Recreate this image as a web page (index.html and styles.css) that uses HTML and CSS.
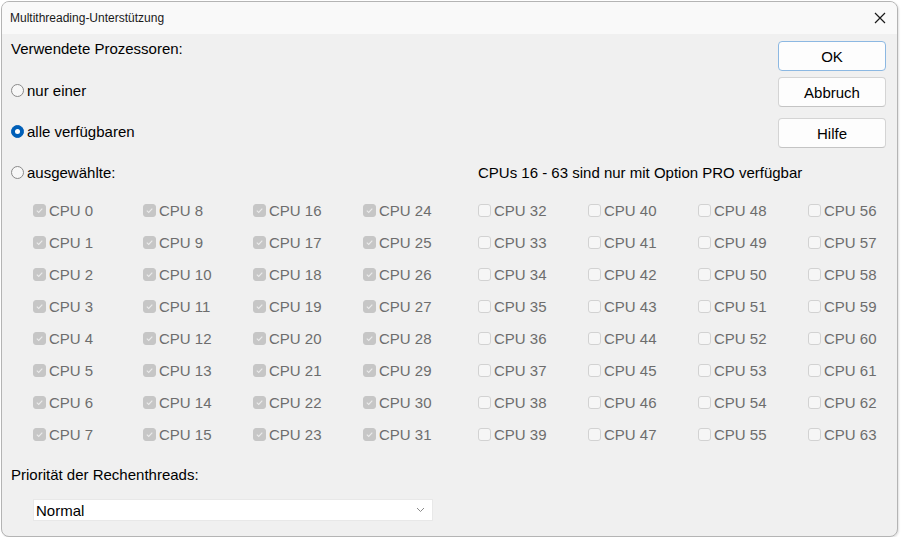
FILE: index.html
```html
<!DOCTYPE html>
<html lang="de">
<head>
    <meta charset="UTF-8">
    <title>Multithreading-Unterstützung</title>
    <link rel="stylesheet" href="styles.css">
</head>
<body>
    <div class="window">
        <div class="titlebar">
            <span class="title">Multithreading-Unterstützung</span>
            <svg class="close" width="12" height="12" viewBox="0 0 12 12">
                <path d="M1 1L11 11M11 1L1 11" stroke="#1a1a1a" stroke-width="1.2" fill="none"/>
            </svg>
        </div>

        <div class="content">
            <div class="main">
                <div class="heading">Verwendete Prozessoren:</div>

                <div class="radio-row">
                    <label class="radio"><span class="dot"></span>nur einer</label>
                </div>
                <div class="radio-row">
                    <label class="radio"><span class="dot checked"></span>alle verfügbaren</label>
                </div>
                <div class="radio-row">
                    <label class="radio pick"><span class="dot"></span>ausgewählte:</label>
                    <span class="note">CPUs 16 - 63 sind nur mit Option PRO verfügbar</span>
                </div>

                <div class="cpu-grid" id="cpuGrid"></div>

                <div class="heading priority">Priorität der Rechenthreads:</div>
                <div class="select">
                    <span>Normal</span>
                    <svg width="9" height="6" viewBox="0 0 9 6">
                        <path d="M1 1L4.5 4.5L8 1" stroke="#8a8a8a" stroke-width="1" fill="none"/>
                    </svg>
                </div>
            </div>

            <div class="buttons">
                <button class="btn default">OK</button>
                <button class="btn">Abbruch</button>
                <button class="btn help">Hilfe</button>
            </div>
        </div>
    </div>

    <script>
        const grid = document.getElementById('cpuGrid');
        for (let i = 0; i < 64; i++) {
            const item = document.createElement('div');
            item.className = 'cpu';
            const box = document.createElement('span');
            box.className = i < 32 ? 'box checked' : 'box';
            if (i < 32) {
                box.innerHTML = '<svg width="9" height="9" viewBox="0 0 9 9"><path d="M1.8 4.6L3.7 6.4L7.3 2.6" stroke="#ececec" stroke-width="1.1" fill="none"/></svg>';
            }
            item.appendChild(box);
            item.appendChild(document.createTextNode('CPU ' + i));
            grid.appendChild(item);
        }
    </script>
</body>
</html>
```

FILE: styles.css
```css
body {
    margin: 0;
    background: #ffffff;
    font-family: "Liberation Sans", Arial, sans-serif;
    font-size: 15px;
    color: #000;
}
.window {
    margin: 1px 0 0 1px;
    width: 895px;
    height: 534px;
    border: 1px solid #b4b4b4;
    border-radius: 8px;
    background: #f0f0f0;
    overflow: hidden;
    display: flex;
    flex-direction: column;
    box-shadow: 1px 1px 2px rgba(0,0,0,0.12);
}
.titlebar {
    height: 32px;
    flex: none;
    background: #f9f9f9;
    display: flex;
    align-items: center;
    justify-content: space-between;
    padding: 0 10px 0 8px;
}
.title {
    font-size: 12px;
    color: #1a1a1a;
}
.close {
    margin-right: 1px;
}
.content {
    flex: 1;
    display: flex;
}
.main {
    flex: 1;
    min-width: 0;
    padding: 5px 0 0 9px;
}
.heading {
    line-height: 20px;
    height: 20px;
}
.heading + .radio-row {
    margin-top: 11px;
}
.radio-row {
    height: 41px;
    display: flex;
    align-items: center;
}
.radio {
    display: flex;
    align-items: center;
    flex: none;
}
.radio.pick {
    width: 467px;
}
.note {
    white-space: nowrap;
}
.dot {
    width: 11px;
    height: 11px;
    border: 1px solid #8a8a8a;
    border-radius: 50%;
    background: #f7f7f7;
    margin-right: 3px;
    box-sizing: content-box;
    position: relative;
}
.dot.checked {
    background: #005fb8;
    border-color: #005fb8;
}
.dot.checked::after {
    content: "";
    position: absolute;
    left: 3px;
    top: 3px;
    width: 5px;
    height: 5px;
    border-radius: 50%;
    background: #fff;
}
.cpu-grid {
    margin: 1px 0 0 22px;
    display: grid;
    grid-auto-flow: column;
    grid-template-rows: repeat(8, 32px);
    grid-template-columns: repeat(3, 110px) 115px repeat(3, 110px) 80px;
}
.cpu {
    display: flex;
    align-items: center;
    color: #6d6d6d;
    white-space: nowrap;
}
.box {
    width: 11px;
    height: 11px;
    border: 1px solid #d2d2d2;
    border-radius: 3px;
    background: #f6f6f6;
    margin-right: 3px;
    display: flex;
    align-items: center;
    justify-content: center;
}
.box.checked {
    background: #c6c6c6;
    border-color: #c6c6c6;
}
.priority {
    margin-top: 15px;
}
.select {
    margin: 14px 0 0 22px;
    width: 400px;
    height: 22px;
    box-sizing: border-box;
    background: #fff;
    border: 1px solid #e8e8e8;
    display: flex;
    align-items: center;
    justify-content: space-between;
    padding: 0 7px 0 2px;
}
.buttons {
    flex: none;
    width: 108px;
    margin-right: 11px;
    padding-top: 7px;
    display: flex;
    flex-direction: column;
}
.btn {
    font-family: inherit;
    font-size: 15px;
    height: 30px;
    background: #fdfdfd;
    border: 1px solid #d4d4d4;
    border-bottom-color: #c4c4c4;
    border-radius: 4px;
    margin-bottom: 6px;
    color: #000;
    padding: 0;
}
.btn.default {
    border-color: #8cb8e2;
}
.btn.help {
    margin-top: 5px;
}
```
